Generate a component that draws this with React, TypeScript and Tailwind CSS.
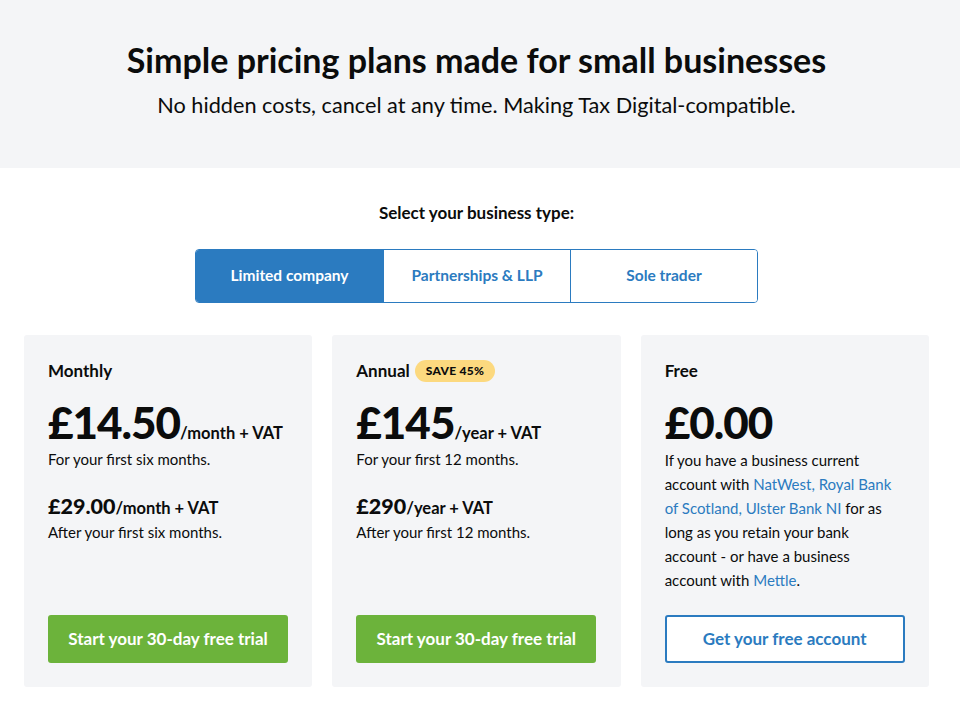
import React, { useState } from 'react';

const tabs = ['Limited company', 'Partnerships & LLP', 'Sole trader'];

const PlanButton = ({ children }: { children: React.ReactNode }) => (
  <button className="w-[240px] h-12 rounded-[3px] bg-[#6cb33b] text-white text-[17px] font-bold">
    {children}
  </button>
);

const Price = ({ amount, unit }: { amount: string; unit: string }) => (
  <div className="mt-[16px] flex items-baseline whitespace-nowrap">
    <span className="text-[44px] font-black leading-[46px] tracking-[-1px]">{amount}</span>
    <span className="text-[16.5px] font-bold">{unit}</span>
  </div>
);

const LaterPrice = ({ amount, unit }: { amount: string; unit: string }) => (
  <div className="mt-[25px] flex items-baseline whitespace-nowrap">
    <span className="text-[21.5px] font-black leading-6">{amount}</span>
    <span className="text-[16.5px] font-bold">{unit}</span>
  </div>
);

export default function App() {
  const [active, setActive] = useState(0);

  return (
    <div className="min-h-screen bg-white text-[#0b0c0c]" style={{ fontFamily: 'Lato, "Noto Sans", sans-serif' }}>
      <header className="bg-[#f4f5f7] h-[168px]">
        <div className="w-[953px] flex flex-col items-center pt-[38px]">
          <h1 className="text-[34px] font-bold leading-[44px]">
            Simple pricing plans made for small businesses
          </h1>
          <p className="text-[21.7px] leading-[30px] mt-[8px]">
            No hidden costs, cancel at any time. Making Tax Digital-compatible.
          </p>
        </div>
      </header>

      <div className="w-[953px]">
        <section className="flex flex-col items-center">
          <p className="mt-[33px] text-[17px] font-bold leading-6">Select your business type:</p>
          <div className="mt-[24px] flex border border-[#2b7bc0] rounded-[4px] overflow-hidden">
            {tabs.map((t, i) => (
              <button
                key={t}
                onClick={() => setActive(i)}
                className={
                  'w-[187px] h-[52px] text-[15.5px] font-bold ' +
                  (i === active ? 'bg-[#2b7bc0] text-white' : 'bg-white text-[#2b7bc0]') +
                  (i > 0 ? ' border-l border-[#2b7bc0]' : '')
                }
              >
                {t}
              </button>
            ))}
          </div>
        </section>

        <div className="mt-[32px] px-6 grid grid-cols-3 gap-5">
          <div className="bg-[#f4f5f7] rounded-[3px] h-[352px] px-6 pt-[24px] pb-6 flex flex-col">
            <div className="h-6 flex items-center text-[17px] font-bold">Monthly</div>
            <Price amount="£14.50" unit="/month + VAT" />
            <p className="text-[15px] leading-5 mt-[3px]">For your first six months.</p>
            <LaterPrice amount="£29.00" unit="/month + VAT" />
            <p className="text-[15px] leading-5 mt-[1px]">After your first six months.</p>
            <div className="mt-auto">
              <PlanButton>Start your 30-day free trial</PlanButton>
            </div>
          </div>

          <div className="bg-[#f4f5f7] rounded-[3px] h-[352px] px-6 pt-[24px] pb-6 flex flex-col">
            <div className="h-6 flex items-center gap-[5px] text-[17px] font-bold">
              Annual
              <span className="bg-[#fcd97f] rounded-full px-[11px] h-[22px] flex items-center text-[12px] font-black tracking-[0.3px]">
                SAVE 45%
              </span>
            </div>
            <Price amount="£145" unit="/year + VAT" />
            <p className="text-[15px] leading-5 mt-[3px]">For your first 12 months.</p>
            <LaterPrice amount="£290" unit="/year + VAT" />
            <p className="text-[15px] leading-5 mt-[1px]">After your first 12 months.</p>
            <div className="mt-auto">
              <PlanButton>Start your 30-day free trial</PlanButton>
            </div>
          </div>

          <div className="bg-[#f4f5f7] rounded-[3px] h-[352px] px-6 pt-[24px] pb-6 flex flex-col">
            <div className="h-6 flex items-center text-[17px] font-bold">Free</div>
            <div className="mt-[16px] text-[44px] font-black leading-[46px] tracking-[-1px]">£0.00</div>
            <p className="w-[230px] text-[15px] leading-6 mt-[3px]">
              If you have a business current account with{' '}
              <a className="text-[#2b7bc0]">NatWest, Royal Bank of Scotland, Ulster Bank NI</a> for as long as you
              retain your bank account - or have a business account with <a className="text-[#2b7bc0]">Mettle</a>.
            </p>
            <div className="mt-auto">
              <button className="w-[240px] h-12 rounded-[3px] border-2 border-[#2b7bc0] bg-white text-[#2b7bc0] text-[17px] font-bold">
                Get your free account
              </button>
            </div>
          </div>
        </div>
      </div>
    </div>
  );
}
